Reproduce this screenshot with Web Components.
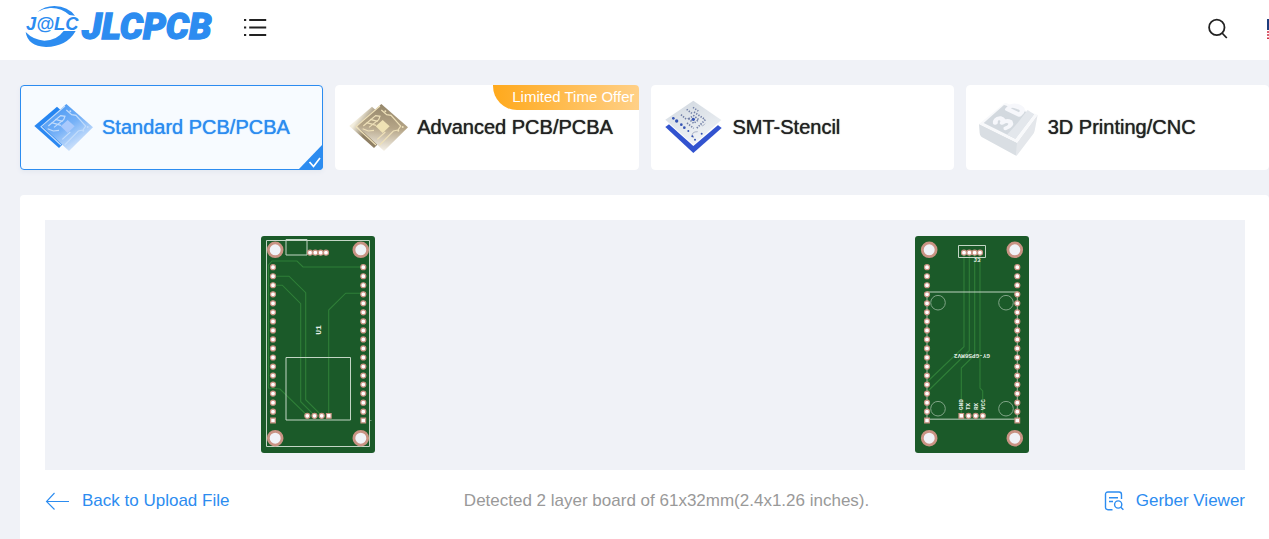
<!DOCTYPE html>
<html lang="en">
<head>
<meta charset="utf-8">
<meta name="viewport" content="width=device-width, initial-scale=1">
<title>JLCPCB Quote</title>
<style>
  html { background: #f0f2f7; }
  body { margin: 0; font-family: "Liberation Sans", Arial, sans-serif; color: #222; overflow-x: hidden; }
</style>
</head>
<body>
<quote-page></quote-page>

<script>
const define = (name, html, setup) => {
  const template = document.createElement('template');
  template.innerHTML = html;
  customElements.define(name, class extends HTMLElement {
    constructor() {
      super();
      this.attachShadow({ mode: 'open' }).append(template.content.cloneNode(true));
    }
    connectedCallback() { if (setup) setup(this, this.shadowRoot); }
  });
};

/* ---------- header ---------- */
define('site-logo', `
<style>
  :host { display: block; }
  a, svg { display: block; }
  text { font-style: italic; fill: #2c8cf0; }
  .word { font: italic 900 109px Roboto, sans-serif; stroke: #2c8cf0; stroke-width: 4; }
  .mark { font: italic 700 55px "Liberation Sans", Arial, sans-serif; }
</style>
<a href="#" aria-label="JLCPCB home">
  <svg width="200" height="60" viewBox="15 0 600 180">
    <g fill="#2c8cf0">
      <path d="M67 36 Q88 18 118 18 Q160 20 180 47 L163 45 Q138 22 105 24 Q84 26 67 36Z"/>
      <path d="M32 96 Q38 138 93 141 Q155 140 182 93 L146 93 Q125 122 88 122 Q55 120 32 96Z"/>
    </g>
    <text class="mark" x="33" y="90">J@LC</text>
    <text class="word" x="201" y="116">JLCPCB</text>
  </svg>
</a>`);

define('site-header', `
<style>
  :host { display: block; background: #fff; }
  header { display: flex; align-items: center; height: 60px; padding-left: 20px; overflow: hidden; }
  button { border: 0; padding: 0; background: none; display: block; cursor: pointer; }
  svg { display: block; }
  .menu { margin-left: 23px; padding-bottom: 7px; }
  .search { margin-left: auto; padding-bottom: 2px; }
  .flag { margin-left: 39px; width: 2px; height: 22px; padding-bottom: 2px; overflow: hidden; }
</style>
<header>
  <site-logo></site-logo>
  <button class="menu" aria-label="Menu">
    <svg width="24" height="20" viewBox="0 0 24 20" fill="none" stroke="#222" stroke-width="2.2">
      <path d="M1 3h2.2M1 10.5h2.2M1 18h2.2M6.2 3H23.2M6.2 10.5H23.2M6.2 18H23.2"/>
    </svg>
  </button>
  <button class="search" aria-label="Search">
    <svg width="20" height="22" viewBox="0 0 20 22" fill="none" stroke="#222" stroke-width="1.8">
      <circle cx="8.8" cy="9.4" r="7.7"/><path d="M14 15l4.8 5"/>
    </svg>
  </button>
  <button class="flag" aria-label="Region">
    <svg width="30" height="20" viewBox="0 0 30 20">
      <path fill="#fff" d="M0 0h30v20H0z"/>
      <path stroke="#d02f44" stroke-width="1.5" d="M0 .8h30M0 3.9h30M0 7h30M0 10h30M0 13h30M0 16.1h30M0 19.2h30"/>
      <path fill="#1c3c7c" d="M0 0h13v11H0z"/>
    </svg>
  </button>
</header>`);

/* ---------- product icons ---------- */
const chip = c => `
  <svg width="60" height="60" viewBox="57 58 180 180">
    <defs>
      <linearGradient id="b" x1="${c.fade ? 0 : .5}" y1="${c.fade ? .6 : 0}" x2=".7" y2="1">
        <stop offset="0" stop-color="${c.back0}"/><stop offset=".4" stop-color="${c.back1}"/><stop offset="1" stop-color="${c.back1}"/>
      </linearGradient>
      <linearGradient id="f" x1="${c.fade ? .6 : .1}" y1="0" x2="${c.fade ? .5 : .8}" y2="1">
        <stop offset="0" stop-color="${c.front0}"/><stop offset=".5" stop-color="${c.front1}"/><stop offset="1" stop-color="${c.front2}"/>
      </linearGradient>
    </defs>
    <path fill="url(#b)" d="M126 84l68 62-62 62-74-66z"/>
    <path fill="url(#f)" d="M154 76l80 70-72 71-80-74z"/>
    <g fill="none" stroke="${c.line}" stroke-width="3.5">
      <path d="M150 82L78 144l60 55"/>
      <path d="M100 142l37-31 13 2-4 10-29 23"/>
      <path d="M110 132l28 8M121 122l22 6M98 150l17 7 17-2"/>
      <path d="M154 94l16 14 13 2 29 32-8 12-14 3-41 42"/>
      <path d="M142 182l24-22"/>
    </g>
    <path fill="${c.die}" d="M158 124l21 19-21 20-21-20z"/>
    <g fill="${c.line}"><circle cx="218" cy="145" r="3"/><circle cx="205" cy="156" r="3"/><circle cx="166" cy="98" r="3"/></g>
  </svg>`;

define('icon-standard', `<style>:host,svg{display:block}</style>` +
  chip({ back0: '#2384f0', back1: '#2b88f2', front0: '#3f93f3', front1: '#76b1f7', front2: '#eaf1fd', line: '#c2dcfb', die: '#a9c9fc' }));
define('icon-advanced', `<style>:host,svg{display:block}</style>` +
  chip({ fade: true, back0: '#f3eede', back1: '#8e7f64', front0: '#94866a', front1: '#b5a587', front2: '#f5f1e9', line: '#eee0b8', die: '#efe2b4' }));

define('icon-stencil', `
<style>:host,svg{display:block}</style>
<svg width="60" height="60" viewBox="60 58 180 180">
  <defs><linearGradient id="s" x1="0" y1="0" x2=".4" y2="1"><stop stop-color="#d0d7df"/><stop offset="1" stop-color="#f0f3f6"/></linearGradient></defs>
  <path fill="#3253cf" d="M145 82l85 66-85 75-84-78z"/>
  <path fill="#fff" d="M61 127l84 75 85-72-1-8H62z"/>
  <path fill="url(#s)" d="M145 66l84 58-84 74-84-75z"/>
  <g fill="none" stroke="#7380a8" stroke-width="5" stroke-dasharray="4 4">
    <path d="M125 92l18 14M144 86l16 11M108 108l15 13M147 100l32 22M126 133l20 16M181 123l-26 26"/>
    <path d="M131 120l15-9 15 12-15 11z"/>
  </g>
  <g fill="none" stroke="#8d99b2" stroke-width="2"><path d="M165 135l8 7 7-7M142 173q-3-14 16-14M145 178v-6"/></g>
  <g fill="#3554b4">
    <circle cx="145" cy="122" r="5"/><circle cx="85" cy="119" r="4"/><circle cx="95" cy="127" r="5"/><circle cx="109" cy="138" r="4"/>
    <circle cx="118" cy="147" r="4"/><circle cx="130" cy="157" r="3"/><circle cx="150" cy="183" r="3"/><circle cx="170" cy="165" r="3"/><circle cx="142" cy="173" r="3"/>
  </g>
</svg>`);

define('icon-printing', `
<style>
  :host,svg{display:block}
  svg{overflow:visible}
</style>
<svg width="60" height="60" viewBox="75 58 180 180">
  <path fill="#d9dee3" d="M72 136l114 56-1 39q-4 0-10-4L80 175q-6-4-6-12z"/>
  <path fill="#e4e7eb" d="M186 192l62-84-9 48q-1 6-6 12l-48 63z"/>
  <path fill="#f8f9fb" d="M72 136l73-60q6-5 14-1l89 33-62 84z"/>
  <path fill="#d3d9df" d="M86 133l61-54 90 28-56 73z"/>
  <path fill="#e3e7ec" d="M182 140l36-46 19 13-55 73-26-12z"/>
  <g fill="none" stroke="#f6f7fb" stroke-width="14" stroke-linecap="round" stroke-linejoin="round">
    <path transform="matrix(.65 -.7 .85 .4 145 132)" d="M-12-19Q0-30 9-19 11-5-2-2 13 0 12 15 4 29-13 19"/>
    <path transform="matrix(.65 -.7 .85 .4 182 93)" d="M-10-21V21H0Q14 18 14 0 14-18 0-21Z"/>
  </g>
</svg>`);

/* ---------- product card ---------- */
define('product-card', `
<style>
  :host { display: block; min-width: 0; }
  button {
    position: relative; display: flex; align-items: center; gap: 8px; width: 100%; height: 85px;
    box-sizing: border-box; padding: 0 13px; border: 1px solid #fff; border-radius: 4px;
    background: #fff; color: #222; font: 20px "Liberation Sans", Arial, sans-serif; text-align: left; cursor: pointer;
  }
  .title { text-shadow: 0 0 1px currentColor; white-space: nowrap; }
  .tick { display: none; position: absolute; right: -1px; bottom: -1px; }
  .offer { position: absolute; top: -1px; right: -1px; }
  :host([selected]) button { border-color: #2c8cf0; background: #f7fbff; color: #2c8cf0; box-shadow: 0 2px 4px #e4e8f0; }
  :host([selected]) .tick { display: block; }
  ::slotted([slot="offer"]) {
    display: block; padding: 0 4px 1px 19px; border-radius: 0 4px 0 24px;
    background: linear-gradient(90deg, #ffa91c, #ffd087); color: #fff; font-size: 15px; line-height: 24px;
  }
</style>
<button type="button">
  <slot name="icon"></slot>
  <span class="title"><slot></slot></span>
  <span class="offer"><slot name="offer"></slot></span>
  <svg class="tick" width="25" height="26" viewBox="0 0 25 26">
    <path fill="#2c8cf0" d="M25 0v22q0 4-4 4H0z"/>
    <path fill="none" stroke="#fff" stroke-width="1.7" d="M11.5 18l4 4.5 6.500-8.500"/>
  </svg>
</button>`, (host, root) => {
  root.querySelector('button').setAttribute('aria-pressed', host.hasAttribute('selected'));
});

/* ---------- boards ---------- */
const range = (n, f) => Array.from({ length: n }, (_, i) => f(i)).join('');
const pad = (x, y) => `<circle cx="${x}" cy="${y}" r="2.5"/>`;
const square = (x, y) => `<path d="M${x - 2.3} ${y - 2.3}h4.600v4.600h-4.600z"/>`;
const hole = (x, y) => `<circle cx="${x}" cy="${y}" r="6.900"/>`;
const pcb = (traces, silk, pads, labels) => `
<style>
  :host, svg { display: block; }
  .trace { fill: none; stroke: #2f7f38; stroke-width: 1.1; }
  .silk { fill: none; stroke: #c3d6c5; stroke-width: 1; }
  .pads { fill: #fff; stroke: #cb9484; stroke-width: 1.2; }
  .holes { fill: #f0f2f7; stroke: #c99384; stroke-width: 2.8; }
  text { font-family: "Liberation Mono", monospace; font-weight: 700; fill: #e8f0e8; text-anchor: middle; }
  .start text { text-anchor: start; }
</style>
<svg width="114" height="217" viewBox="0 0 114 217">
  <rect width="114" height="217" rx="3" fill="#1b5a29"/>
  <g class="trace">${traces}</g>
  <g class="silk">${silk}</g>
  <g class="holes">${hole(14.2, 13.8)}${hole(99.8, 13.8)}${hole(14.2, 202.200)}${hole(99.8, 202.200)}</g>
  <g class="pads">${range(17, i => pad(12, 31.2 + i * 9.03) + pad(102.3, 31.2 + i * 9.03))}${square(12, 184.5)}${square(102.3, 184.5)}${pads}</g>
  ${labels}
</svg>`;

define('board-top', pcb(
  `<path d="M102 31H42l-6-6H11l-3.500 4v123l11.500 1 27.300 26.700M12 40.200h16l16.700 16.500v107l16 16M12 49.200h9.300l18.400 18.500v98l14 14M102 57.200H84.700L67.700 74v106"/>`,
  `<path d="M5.500 4.500h103v206H5.500zM25 3.500h21v15.500H25zM25 121.500h64.500v62.500H25z"/><path d="M108.500 184.500h2" opacity=".5"/>`,
  `${range(4, i => pad(49 + i * 5.33, 16.7))}${pad(46.3, 179.8)}${pad(53.5, 179.8)}${pad(60.7, 179.8)}${square(67.8, 179.8)}`,
  `<text transform="translate(60 94) rotate(-90)" font-size="8">U1</text>`));

define('board-bottom', pcb(
  `<path d="M49 17v93.700L12 146M54.300 17v97.700L12 156M59.700 17v102L46.300 132v48M65 17v135l2.700 3v25"/>`,
  `<path d="M43.500 9.500h27v12h-27z"/><path stroke-width="1.4" opacity=".65" d="M12 56h90.300M12 183.300h90.300"/><path opacity=".8" d="M12 56v128M102.300 56v128"/><g opacity=".6"><circle cx="23" cy="66.700" r="7.300"/><circle cx="91" cy="66.700" r="7.300"/><circle cx="23" cy="172.700" r="7.300"/><circle cx="91" cy="172.700" r="7.300"/></g>`,
  `${range(4, i => pad(49 + i * 5.33, 16.7))}${square(46.3, 179.8)}${pad(53.5, 179.8)}${pad(60.7, 179.8)}${pad(67.8, 179.8)}`,
  `<g font-size="6">
    <text x="62" y="26">J3</text>
    <text transform="translate(57 118) rotate(180)">GY-GPS6MV2</text>
    <g class="start">
      <text transform="translate(48 174) rotate(-90)">GND</text>
      <text transform="translate(55 174) rotate(-90)">TX</text>
      <text transform="translate(63 174) rotate(-90)">RX</text>
      <text transform="translate(70 174) rotate(-90)">VCC</text>
    </g>
  </g>`));

/* ---------- preview panel ---------- */
define('board-preview', `
<style>
  :host { display: block; padding: 25px 24px 25px 25px; border-radius: 4px; background: #fff; box-sizing: border-box; }
  .stage { display: flex; justify-content: space-between; align-items: flex-start; height: 250px; padding: 16px 18%; box-sizing: border-box; background: #f0f2f7; }
  .bar { display: flex; justify-content: space-between; align-items: center; height: 62px; font-size: 17px; line-height: 20px; }
  a { display: flex; align-items: center; gap: 12px; color: #2c8cf0; text-decoration: none; }
  p { margin: 0; color: #999; }
  svg { display: block; }
</style>
<div class="stage"><board-top></board-top><board-bottom></board-bottom></div>
<div class="bar">
  <a href="#">
    <svg width="25" height="20" viewBox="0 0 25 20" fill="none" stroke="#2c8cf0" stroke-width="1.1"><path d="M9.500 2L1.500 10.500l8 8M1.500 10.500H24"/></svg>
    <span>Back to Upload File</span>
  </a>
  <p>Detected 2 layer board of 61x32mm(2.4x1.26 inches).</p>
  <a href="#">
    <svg width="20" height="20" viewBox="0 0 20 20" fill="none" stroke="#2c8cf0" stroke-width="1.4">
      <path d="M8.500 18.700H4Q1.500 18.700 1.500 16.200V3.500Q1.500 1 4 1H15Q17.500 1 17.500 3.500V8M5 6.700h9M5 10.500h4"/>
      <circle cx="14.200" cy="13.500" r="3.600"/><path d="M16.800 16.200L19.400 18.800"/>
    </svg>
    <span>Gerber Viewer</span>
  </a>
</div>`);

define('quote-page', `
<style>
  :host { display: block; }
  main { padding: 25px 0 0 20px; }
  .products { display: grid; grid-template-columns: repeat(4, minmax(0, 1fr)); gap: 12px; margin-bottom: 25px; }
</style>
<site-header></site-header>
<main>
  <div class="products">
    <product-card selected><icon-standard slot="icon"></icon-standard>Standard PCB/PCBA</product-card>
    <product-card><icon-advanced slot="icon"></icon-advanced>Advanced PCB/PCBA<span slot="offer">Limited Time Offer</span></product-card>
    <product-card><icon-stencil slot="icon"></icon-stencil>SMT-Stencil</product-card>
    <product-card><icon-printing slot="icon"></icon-printing>3D Printing/CNC</product-card>
  </div>
  <board-preview></board-preview>
</main>`);
</script>
</body>
</html>
